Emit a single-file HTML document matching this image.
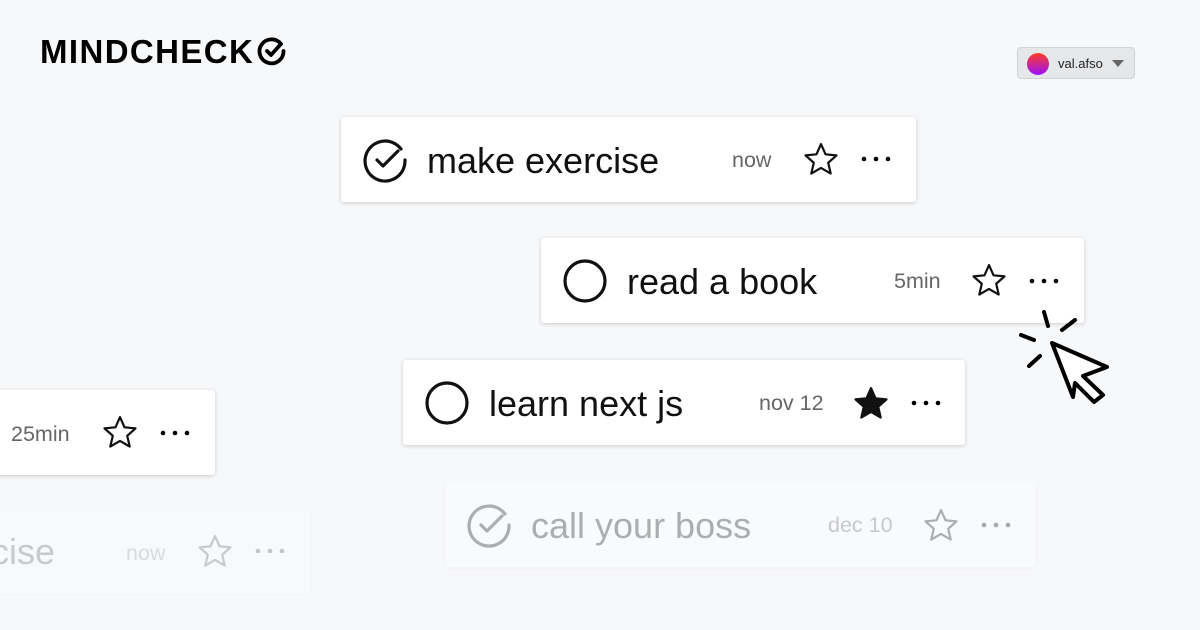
<!DOCTYPE html>
<html><head><style>
body{margin:0;width:1200px;height:630px;background:#f7f8fa;position:relative;overflow:hidden;font-family:"Liberation Sans",sans-serif}
.logo{position:absolute;left:40px;top:33px;font-weight:bold;font-size:33px;letter-spacing:1.4px;color:#000;white-space:nowrap}
.card{position:absolute;height:85px;background:#fff;border-radius:3px;box-shadow:0 1px 4px rgba(0,0,0,0.18)}
.t{position:absolute;top:22px;font-size:36px;color:#111;line-height:44px;white-space:nowrap}
.tm{position:absolute;top:30px;font-size:21.5px;color:#666;line-height:26px;white-space:nowrap}
.ic{position:absolute}
.user{position:absolute;left:1017px;top:47px;width:118px;height:32px;background:#e6e7e9;border:1px solid #d2d3d5;border-radius:4px;box-sizing:border-box}
</style></head><body>
<div class="logo">MINDCHECK<svg style="position:relative;top:3px;left:3px" width="30" height="30" viewBox="0 0 30 30"><path d="M24 8 A12 12 0 1 0 26.5 15" fill="none" stroke="#000" stroke-width="3.8" stroke-linecap="round"/><path d="M10 15 L14 19 L23 9" fill="none" stroke="#000" stroke-width="3.8" stroke-linecap="round" stroke-linejoin="round"/></svg></div>
<div class="user"><div style="position:absolute;left:9px;top:5px;width:22px;height:22px;border-radius:50%;background:linear-gradient(#ff3d1f,#9b10ff)"></div><span style="position:absolute;left:40px;top:8px;font-size:13px;color:#222">val.afso</span><svg style="position:absolute;left:94px;top:12px" width="12" height="8"><path d="M0 0H12L6 7Z" fill="#666"/></svg></div>

<div class="card" style="left:341px;top:117px;width:575px">
<svg class="ic" style="left:20px;top:19px" width="48" height="48" viewBox="0 0 48 48"><path d="M40 13 A20 20 0 1 0 44 24" fill="none" stroke="#111" stroke-width="3.2" stroke-linecap="round"/><path d="M16 24 L22 30 L37 15" fill="none" stroke="#111" stroke-width="3.2" stroke-linecap="round" stroke-linejoin="round"/></svg>
<div class="t" style="left:86px">make exercise</div><div class="tm" style="left:391px">now</div>
<svg class="ic" style="left:461px;top:24px" width="38" height="36" viewBox="0 0 24 23"><path d="M12 2l2.9 6.5 7 .7-5.3 4.7 1.6 6.9L12 17.2 5.8 20.8l1.6-6.9L2.1 9.2l7-.7z" fill="none" stroke="#111" stroke-width="1.4" stroke-linejoin="round"/></svg>
<svg class="ic" style="left:520px;top:39px" width="32" height="6"><circle cx="3" cy="3" r="2.3"/><circle cx="15" cy="3" r="2.3"/><circle cx="27" cy="3" r="2.3"/></svg></div>

<div class="card" style="left:541px;top:238px;width:543px">
<svg class="ic" style="left:20px;top:20px" width="48" height="48"><circle cx="24" cy="23" r="20" fill="none" stroke="#111" stroke-width="3.2"/></svg>
<div class="t" style="left:86px">read a book</div><div class="tm" style="left:353px">5min</div>
<svg class="ic" style="left:429px;top:24px" width="38" height="36" viewBox="0 0 24 23"><path d="M12 2l2.9 6.5 7 .7-5.3 4.7 1.6 6.9L12 17.2 5.8 20.8l1.6-6.9L2.1 9.2l7-.7z" fill="none" stroke="#111" stroke-width="1.4" stroke-linejoin="round"/></svg>
<svg class="ic" style="left:488px;top:40px" width="32" height="6"><circle cx="3" cy="3" r="2.3"/><circle cx="15" cy="3" r="2.3"/><circle cx="27" cy="3" r="2.3"/></svg></div>

<div class="card" style="left:403px;top:360px;width:562px">
<svg class="ic" style="left:20px;top:20px" width="48" height="48"><circle cx="24" cy="23" r="20" fill="none" stroke="#111" stroke-width="3.2"/></svg>
<div class="t" style="left:86px">learn next js</div><div class="tm" style="left:356px">nov 12</div>
<svg class="ic" style="left:449px;top:25px" width="38" height="36" viewBox="0 0 24 23"><path d="M12 2l2.9 6.5 7 .7-5.3 4.7 1.6 6.9L12 17.2 5.8 20.8l1.6-6.9L2.1 9.2l7-.7z" fill="#111" stroke="#111" stroke-width="1.4" stroke-linejoin="round"/></svg>
<svg class="ic" style="left:508px;top:40px" width="32" height="6"><circle cx="3" cy="3" r="2.3"/><circle cx="15" cy="3" r="2.3"/><circle cx="27" cy="3" r="2.3"/></svg></div>

<div class="card" style="left:-20px;top:390px;width:235px">
<div class="tm" style="left:31px;top:31px">25min</div>
<svg class="ic" style="left:121px;top:24px" width="38" height="36" viewBox="0 0 24 23"><path d="M12 2l2.9 6.5 7 .7-5.3 4.7 1.6 6.9L12 17.2 5.8 20.8l1.6-6.9L2.1 9.2l7-.7z" fill="none" stroke="#111" stroke-width="1.4" stroke-linejoin="round"/></svg>
<svg class="ic" style="left:180px;top:40px" width="32" height="6"><circle cx="3" cy="3" r="2.3"/><circle cx="15" cy="3" r="2.3"/><circle cx="27" cy="3" r="2.3"/></svg></div>

<div class="card" style="left:445px;top:482px;width:591px;opacity:0.32;box-shadow:0 1px 4px rgba(0,0,0,0.12)">
<svg class="ic" style="left:20px;top:19px" width="48" height="48" viewBox="0 0 48 48"><path d="M40 13 A20 20 0 1 0 44 24" fill="none" stroke="#111" stroke-width="3.2" stroke-linecap="round"/><path d="M16 24 L22 30 L37 15" fill="none" stroke="#111" stroke-width="3.2" stroke-linecap="round" stroke-linejoin="round"/></svg>
<div class="t" style="left:86px">call your boss</div><div class="tm" style="left:383px">dec 10</div>
<svg class="ic" style="left:477px;top:25px" width="38" height="36" viewBox="0 0 24 23"><path d="M12 2l2.9 6.5 7 .7-5.3 4.7 1.6 6.9L12 17.2 5.8 20.8l1.6-6.9L2.1 9.2l7-.7z" fill="none" stroke="#111" stroke-width="1.4" stroke-linejoin="round"/></svg>
<svg class="ic" style="left:536px;top:40px" width="32" height="6"><circle cx="3" cy="3" r="2.3"/><circle cx="15" cy="3" r="2.3"/><circle cx="27" cy="3" r="2.3"/></svg></div>

<div class="card" style="left:-250px;top:508px;width:560px;opacity:0.2;box-shadow:0 1px 4px rgba(0,0,0,0.1)">
<div class="t" style="left:171px;top:22px">exercise</div><div class="tm" style="left:376px;top:32px">now</div>
<svg class="ic" style="left:446px;top:25px" width="38" height="36" viewBox="0 0 24 23"><path d="M12 2l2.9 6.5 7 .7-5.3 4.7 1.6 6.9L12 17.2 5.8 20.8l1.6-6.9L2.1 9.2l7-.7z" fill="none" stroke="#111" stroke-width="1.4" stroke-linejoin="round"/></svg>
<svg class="ic" style="left:505px;top:40px" width="32" height="6"><circle cx="3" cy="3" r="2.3"/><circle cx="15" cy="3" r="2.3"/><circle cx="27" cy="3" r="2.3"/></svg></div>

<svg style="position:absolute;left:0;top:0" width="1200" height="630"><g fill="none" stroke="#000" stroke-width="4" stroke-linecap="round" stroke-linejoin="round">
<path d="M1052 343 L1107 367 L1083 376 L1103 395 L1094 402 L1075 383 L1073 397 Z" fill="#fff"/>
<path d="M1044 312 L1048 326 M1062 330 L1075 320 M1021 335 L1034 340 M1029 366 L1040 356"/></g></svg>
</body></html>
